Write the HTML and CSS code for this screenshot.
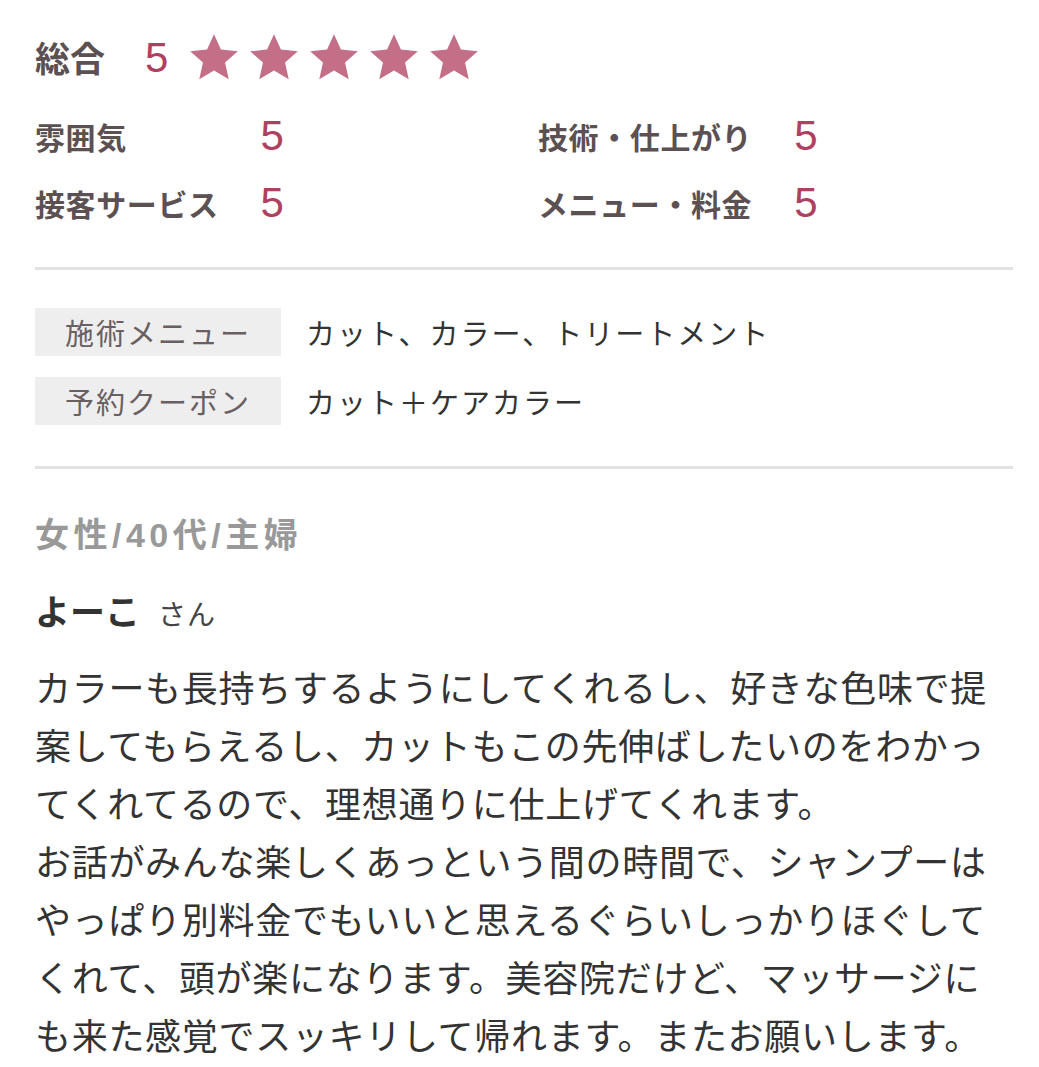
FILE: index.html
```html
<!DOCTYPE html>
<html lang="ja">
<head>
  <meta charset="utf-8">
  <title>口コミ</title>
  <link rel="stylesheet" href="styles.css">
</head>
<body>
  <div class="overall">
    <span class="overall-label">総合</span>
    <span class="overall-num">5</span>
    <span class="stars">
      <svg class="star" viewBox="0 0 24 24"><polygon points="12,1 15.2,8.1 23,8.9 17.1,14.1 18.8,21.8 12,17.8 5.2,21.8 6.9,14.1 1,8.9 8.8,8.1"/></svg>
      <svg class="star" viewBox="0 0 24 24"><polygon points="12,1 15.2,8.1 23,8.9 17.1,14.1 18.8,21.8 12,17.8 5.2,21.8 6.9,14.1 1,8.9 8.8,8.1"/></svg>
      <svg class="star" viewBox="0 0 24 24"><polygon points="12,1 15.2,8.1 23,8.9 17.1,14.1 18.8,21.8 12,17.8 5.2,21.8 6.9,14.1 1,8.9 8.8,8.1"/></svg>
      <svg class="star" viewBox="0 0 24 24"><polygon points="12,1 15.2,8.1 23,8.9 17.1,14.1 18.8,21.8 12,17.8 5.2,21.8 6.9,14.1 1,8.9 8.8,8.1"/></svg>
      <svg class="star" viewBox="0 0 24 24"><polygon points="12,1 15.2,8.1 23,8.9 17.1,14.1 18.8,21.8 12,17.8 5.2,21.8 6.9,14.1 1,8.9 8.8,8.1"/></svg>
    </span>
  </div>

  <div class="scores">
    <dl class="score-group first">
      <dt>雰囲気</dt><dd>5</dd>
      <dt>接客サービス</dt><dd>5</dd>
    </dl>
    <dl class="score-group">
      <dt>技術・仕上がり</dt><dd>5</dd>
      <dt>メニュー・料金</dt><dd>5</dd>
    </dl>
  </div>

  <hr class="divider">

  <div class="menu-info">
    <div class="info-row">
      <span class="info-label">施術メニュー</span>
      <span class="info-value">カット、カラー、トリートメント</span>
    </div>
    <div class="info-row">
      <span class="info-label">予約クーポン</span>
      <span class="info-value">カット＋ケアカラー</span>
    </div>
  </div>

  <hr class="divider second">

  <p class="reviewer-attr">女性/40代/主婦</p>
  <p class="reviewer-name">よーこ<span class="honorific">さん</span></p>

  <p class="review-text">カラーも長持ちするようにしてくれるし、好きな色味で提案してもらえるし、カットもこの先伸ばしたいのをわかってくれてるので、理想通りに仕上げてくれます。<br>お話がみんな楽しくあっという間の時間で、シャンプーはやっぱり別料金でもいいと思えるぐらいしっかりほぐしてくれて、頭が楽になります。美容院だけど、マッサージにも来た感覚でスッキリして帰れます。またお願いします。</p>
</body>
</html>
```

FILE: styles.css
```css
body {
  margin: 0;
  padding: 28px 26px 0 35px;
  font-family: "Noto Sans CJK JP", sans-serif;
  background: #fff;
  color: #333;
}

.overall {
  display: flex;
  align-items: center;
  height: 60px;
}
.overall-label {
  font-size: 35px;
  font-weight: bold;
  color: #5b5052;
  width: 110px;
  line-height: 1;
  margin-top: -4px;
}
.overall-num {
  font-family: "Liberation Sans", sans-serif;
  font-size: 42px;
  color: #b0405f;
  width: 42px;
}
.stars { display: flex; gap: 6px; }
.star { width: 54px; height: 52px; fill: #c46f88; display: block; }

.scores {
  display: flex;
  margin-top: 14px;
}
.score-group {
  display: grid;
  grid-template-columns: auto auto;
  grid-auto-rows: 67px;
  column-gap: 42px;
  align-items: center;
  justify-content: start;
  margin: 0;
}
.score-group.first { width: 503px; }
.score-group dt {
  font-size: 30px;
  letter-spacing: 0.6px;
  font-weight: bold;
  color: #5b5052;
}
.score-group dd {
  margin: 0;
  font-family: "Liberation Sans", sans-serif;
  font-size: 42px;
  color: #b0405f;
}

.divider {
  border: none;
  height: 3px;
  background: #e2e2e2;
  margin: 31px 0 0;
}
.divider.second { margin-top: 41px; }

.menu-info {
  display: flex;
  flex-direction: column;
  gap: 21px;
  margin-top: 38px;
}
.info-row {
  display: flex;
  align-items: center;
  height: 48px;
}
.info-label {
  width: 246px;
  height: 48px;
  line-height: 48px;
  background: #eeeeee;
  color: #686062;
  font-size: 29px;
  letter-spacing: 2px;
  text-align: center;
}
.info-value {
  margin-left: 25px;
  font-size: 29px;
  letter-spacing: 2px;
  color: #333;
}

.reviewer-attr {
  margin: 41px 0 0;
  height: 50px;
  line-height: 50px;
  font-family: "Liberation Sans", "Noto Sans CJK JP", sans-serif;
  font-size: 34px;
  letter-spacing: 4.5px;
  font-weight: bold;
  color: #999;
}
.reviewer-name {
  margin: 25px 0 0;
  height: 50px;
  line-height: 50px;
  font-size: 35px;
  font-weight: bold;
  color: #333;
}
.honorific {
  font-size: 28px;
  font-weight: normal;
  letter-spacing: 1px;
  color: #444;
  margin-left: 18px;
}

.review-text {
  margin: 22px 0 0;
  max-width: 960px;
  font-size: 36px;
  line-height: 58px;
  letter-spacing: 0.7px;
  color: #333;
}
```
